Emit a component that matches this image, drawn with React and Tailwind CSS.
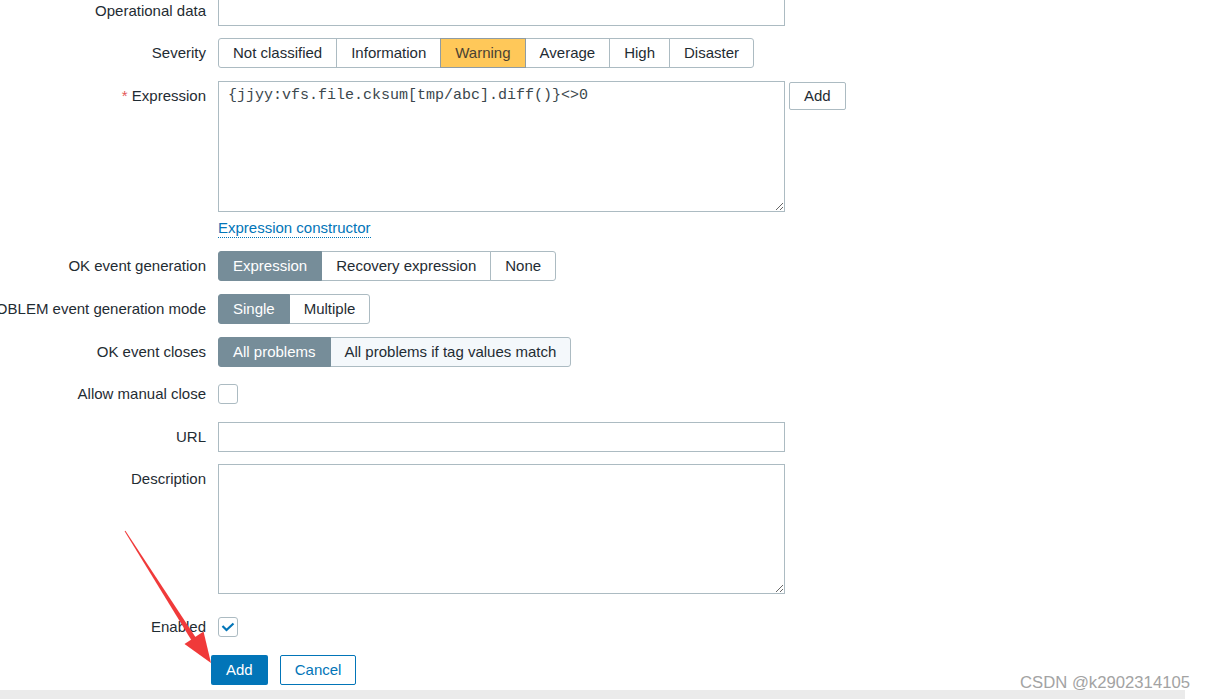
import React from "react";

const font = { fontFamily: '"Liberation Sans", Arial, sans-serif' };

function Row({ label, required, className = "", children }) {
  return (
    <div className={`flex items-start ${className}`}>
      <div className="flex w-[206px] shrink-0 justify-end whitespace-nowrap pt-[6px] leading-[18px]">
        <span>
          {required && <span className="text-[#e45959]">* </span>}
          {label}
        </span>
      </div>
      <div className="ml-[12px] flex items-start">{children}</div>
    </div>
  );
}

function Segmented({ items, active, tone = "grey", hover }) {
  return (
    <div className="flex">
      {items.map((item, i) => {
        const isActive = item === active;
        let look = "bg-white border-[#acbbc2] text-[#1f2c33]";
        if (isActive && tone === "grey") look = "relative z-10 bg-[#768d99] border-[#768d99] text-white";
        if (isActive && tone === "warning") look = "relative z-10 bg-[#ffc859] border-[#8f9ca3] text-[#4a4233]";
        if (item === hover) look = "bg-[#f4f8fb] border-[#acbbc2] text-[#1f2c33]";
        return (
          <div
            key={item}
            className={`border px-[14px] py-[5px] leading-[18px] whitespace-nowrap ${look} ${
              i === 0 ? "rounded-l-[3px]" : "-ml-px"
            } ${i === items.length - 1 ? "rounded-r-[3px]" : ""}`}
          >
            {item}
          </div>
        );
      })}
    </div>
  );
}

function Checkbox({ checked }) {
  return (
    <div className="mt-[5px] flex h-[20px] w-[20px] items-center justify-center rounded-[3px] border border-[#acbbc2] bg-white">
      {checked && (
        <svg width="14" height="10" viewBox="0 0 14 10">
          <polyline points="1.5,4 5.5,8 12.5,1.5" fill="none" stroke="#0275b8" strokeWidth="2.2" />
        </svg>
      )}
    </div>
  );
}

export default function App() {
  return (
    <div className="relative h-[699px] w-[1206px] overflow-hidden bg-white text-[15px] text-[#1f2c33]" style={font}>
      <div className="flex flex-col">
        <Row label="Operational data" className="-mt-[4px]">
          <div className="h-[30px] w-[567px] border border-[#acbbc2] bg-white" />
        </Row>

        <Row label="Severity" className="mt-[12px]">
          <Segmented
            items={["Not classified", "Information", "Warning", "Average", "High", "Disaster"]}
            active="Warning"
            tone="warning"
          />
        </Row>

        <Row label="Expression" required className="mt-[13px]">
          <textarea
            readOnly
            value="{jjyy:vfs.file.cksum[tmp/abc].diff()}<>0"
            className="h-[131px] w-[567px] border border-[#acbbc2] px-[9px] pt-[5px] text-[15px] leading-[18px] text-[#3b474d] outline-none"
            style={{ fontFamily: '"Liberation Mono", "Courier New", monospace' }}
          />
          <div className="ml-[4px] mt-[1px] rounded-[2px] border border-[#acbbc2] bg-white px-[14px] py-[4px] leading-[18px]">
            Add
          </div>
        </Row>

        <div className="mt-[7px] flex">
          <div className="ml-[218px] border-b border-dotted border-[#0275b8] leading-[18px] text-[#0275b8]">
            Expression constructor
          </div>
        </div>

        <Row label="OK event generation" className="mt-[13px]">
          <Segmented items={["Expression", "Recovery expression", "None"]} active="Expression" />
        </Row>

        <Row label="PROBLEM event generation mode" className="mt-[13px]">
          <Segmented items={["Single", "Multiple"]} active="Single" />
        </Row>

        <Row label="OK event closes" className="mt-[13px]">
          <Segmented
            items={["All problems", "All problems if tag values match"]}
            active="All problems"
            hover="All problems if tag values match"
          />
        </Row>

        <Row label="Allow manual close" className="mt-[12px] h-[30px]">
          <Checkbox />
        </Row>

        <Row label="URL" className="mt-[13px]">
          <div className="h-[30px] w-[567px] border border-[#acbbc2] bg-white" />
        </Row>

        <Row label="Description" className="mt-[12px]">
          <textarea
            readOnly
            className="h-[130px] w-[567px] border border-[#acbbc2] outline-none"
          />
        </Row>

        <Row label="Enabled" className="mt-[18px] h-[30px]">
          <Checkbox checked />
        </Row>

        <div className="mt-[13px] flex pl-[211px]">
          <div className="rounded-[2px] bg-[#0275b8] px-[15px] py-[6px] leading-[18px] text-white">Add</div>
          <div className="ml-[12px] rounded-[2px] border border-[#0275b8] bg-white px-[14px] py-[5px] leading-[18px] text-[#0275b8]">
            Cancel
          </div>
        </div>

        <div className="mt-[5px] h-[9px] w-[1185px] bg-[#ebebeb]" />
      </div>

      {/* red annotation arrow */}
      <svg className="absolute left-0 top-0" width="1206" height="699">
        <polygon points="124.6,531.3 125.4,530.7 196.4,638.4 192.2,641.4" fill="#f03a3a" />
        <polygon points="211,663 184.5,644 203.5,631.5" fill="#f03a3a" />
      </svg>

      <div className="absolute left-[1020px] top-[673px] text-[16.7px] leading-[20px] text-[#a3a3a3]">
        CSDN @k2902314105
      </div>
    </div>
  );
}
